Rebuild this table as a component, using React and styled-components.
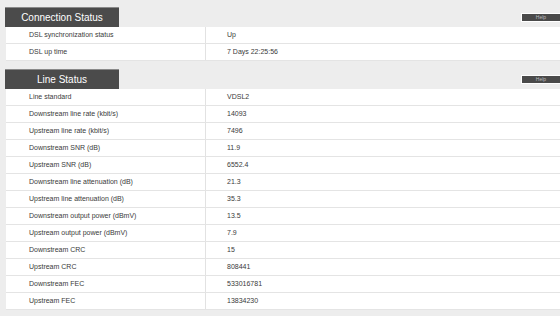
import React from "react"
import styled, { createGlobalStyle } from "styled-components"

const connection = [
  ["DSL synchronization status", "Up"],
  ["DSL up time", "7 Days 22:25:56"],
]

const line = [
  ["Line standard", "VDSL2"],
  ["Downstream line rate (kbit/s)", "14093"],
  ["Upstream line rate (kbit/s)", "7496"],
  ["Downstream SNR (dB)", "11.9"],
  ["Upstream SNR (dB)", "6552.4"],
  ["Downstream line attenuation (dB)", "21.3"],
  ["Upstream line attenuation (dB)", "35.3"],
  ["Downstream output power (dBmV)", "13.5"],
  ["Upstream output power (dBmV)", "7.9"],
  ["Downstream CRC", "15"],
  ["Upstream CRC", "808441"],
  ["Downstream FEC", "533016781"],
  ["Upstream FEC", "13834230"],
]

const GlobalStyle = createGlobalStyle`
  html, body {
    margin: 0;
    padding: 0;
    background: #ededed;
    overflow: hidden;
  }
  body {
    font-family: "Liberation Sans", Arial, sans-serif;
  }
`

const Page = styled.div`
  display: flex;
  flex-direction: column;
  gap: 8px;
  padding: 7px 0 0 5px;
`

const Section = styled.section`
  display: flex;
  flex-direction: column;
`

const TitleBar = styled.div`
  display: flex;
  justify-content: space-between;
  align-items: flex-start;
`

const Title = styled.h2`
  width: 114px;
  height: 20px;
  margin: 0;
  box-sizing: border-box;
  background: #4b4b4b;
  border-top: 1px solid #8a8a8a;
  color: #fff;
  font-size: 10px;
  font-weight: normal;
  line-height: 19px;
  text-align: center;
`

const HelpButton = styled.button`
  width: 39px;
  height: 9px;
  margin-top: 6px;
  padding: 0;
  box-sizing: border-box;
  background: #4a4a4a;
  border: 1px solid #fff;
  border-right: 0;
  color: #bdbdbd;
  font-family: "Liberation Sans", Arial, sans-serif;
  font-size: 5px;
  line-height: 7px;
  text-align: center;
`

const Table = styled.div`
  margin-left: 1px;
  background: #fff;
`

const Row = styled.div`
  display: grid;
  grid-template-columns: 199px 1fr;
  height: 17px;
  box-sizing: border-box;
  border-bottom: 1px solid #e4e4e4;
  font-size: 7px;
  color: #3a3a3a;
  line-height: 16px;
`

const Cell = styled.div`
  padding-left: ${props => (props.value ? "21px" : "23px")};
  border-left: ${props => (props.value ? "1px solid #e2e2e2" : "none")};
  white-space: nowrap;
`

const StatusSection = ({ title, rows }) => (
  <Section>
    <TitleBar>
      <Title>{title}</Title>
      <HelpButton type="button">Help</HelpButton>
    </TitleBar>
    <Table>
      {rows.map(([label, value]) => (
        <Row key={label}>
          <Cell>{label}</Cell>
          <Cell value>{value}</Cell>
        </Row>
      ))}
    </Table>
  </Section>
)

const App = () => (
  <>
    <GlobalStyle />
    <Page>
      <StatusSection title="Connection Status" rows={connection} />
      <StatusSection title="Line Status" rows={line} />
    </Page>
  </>
)

export default App
